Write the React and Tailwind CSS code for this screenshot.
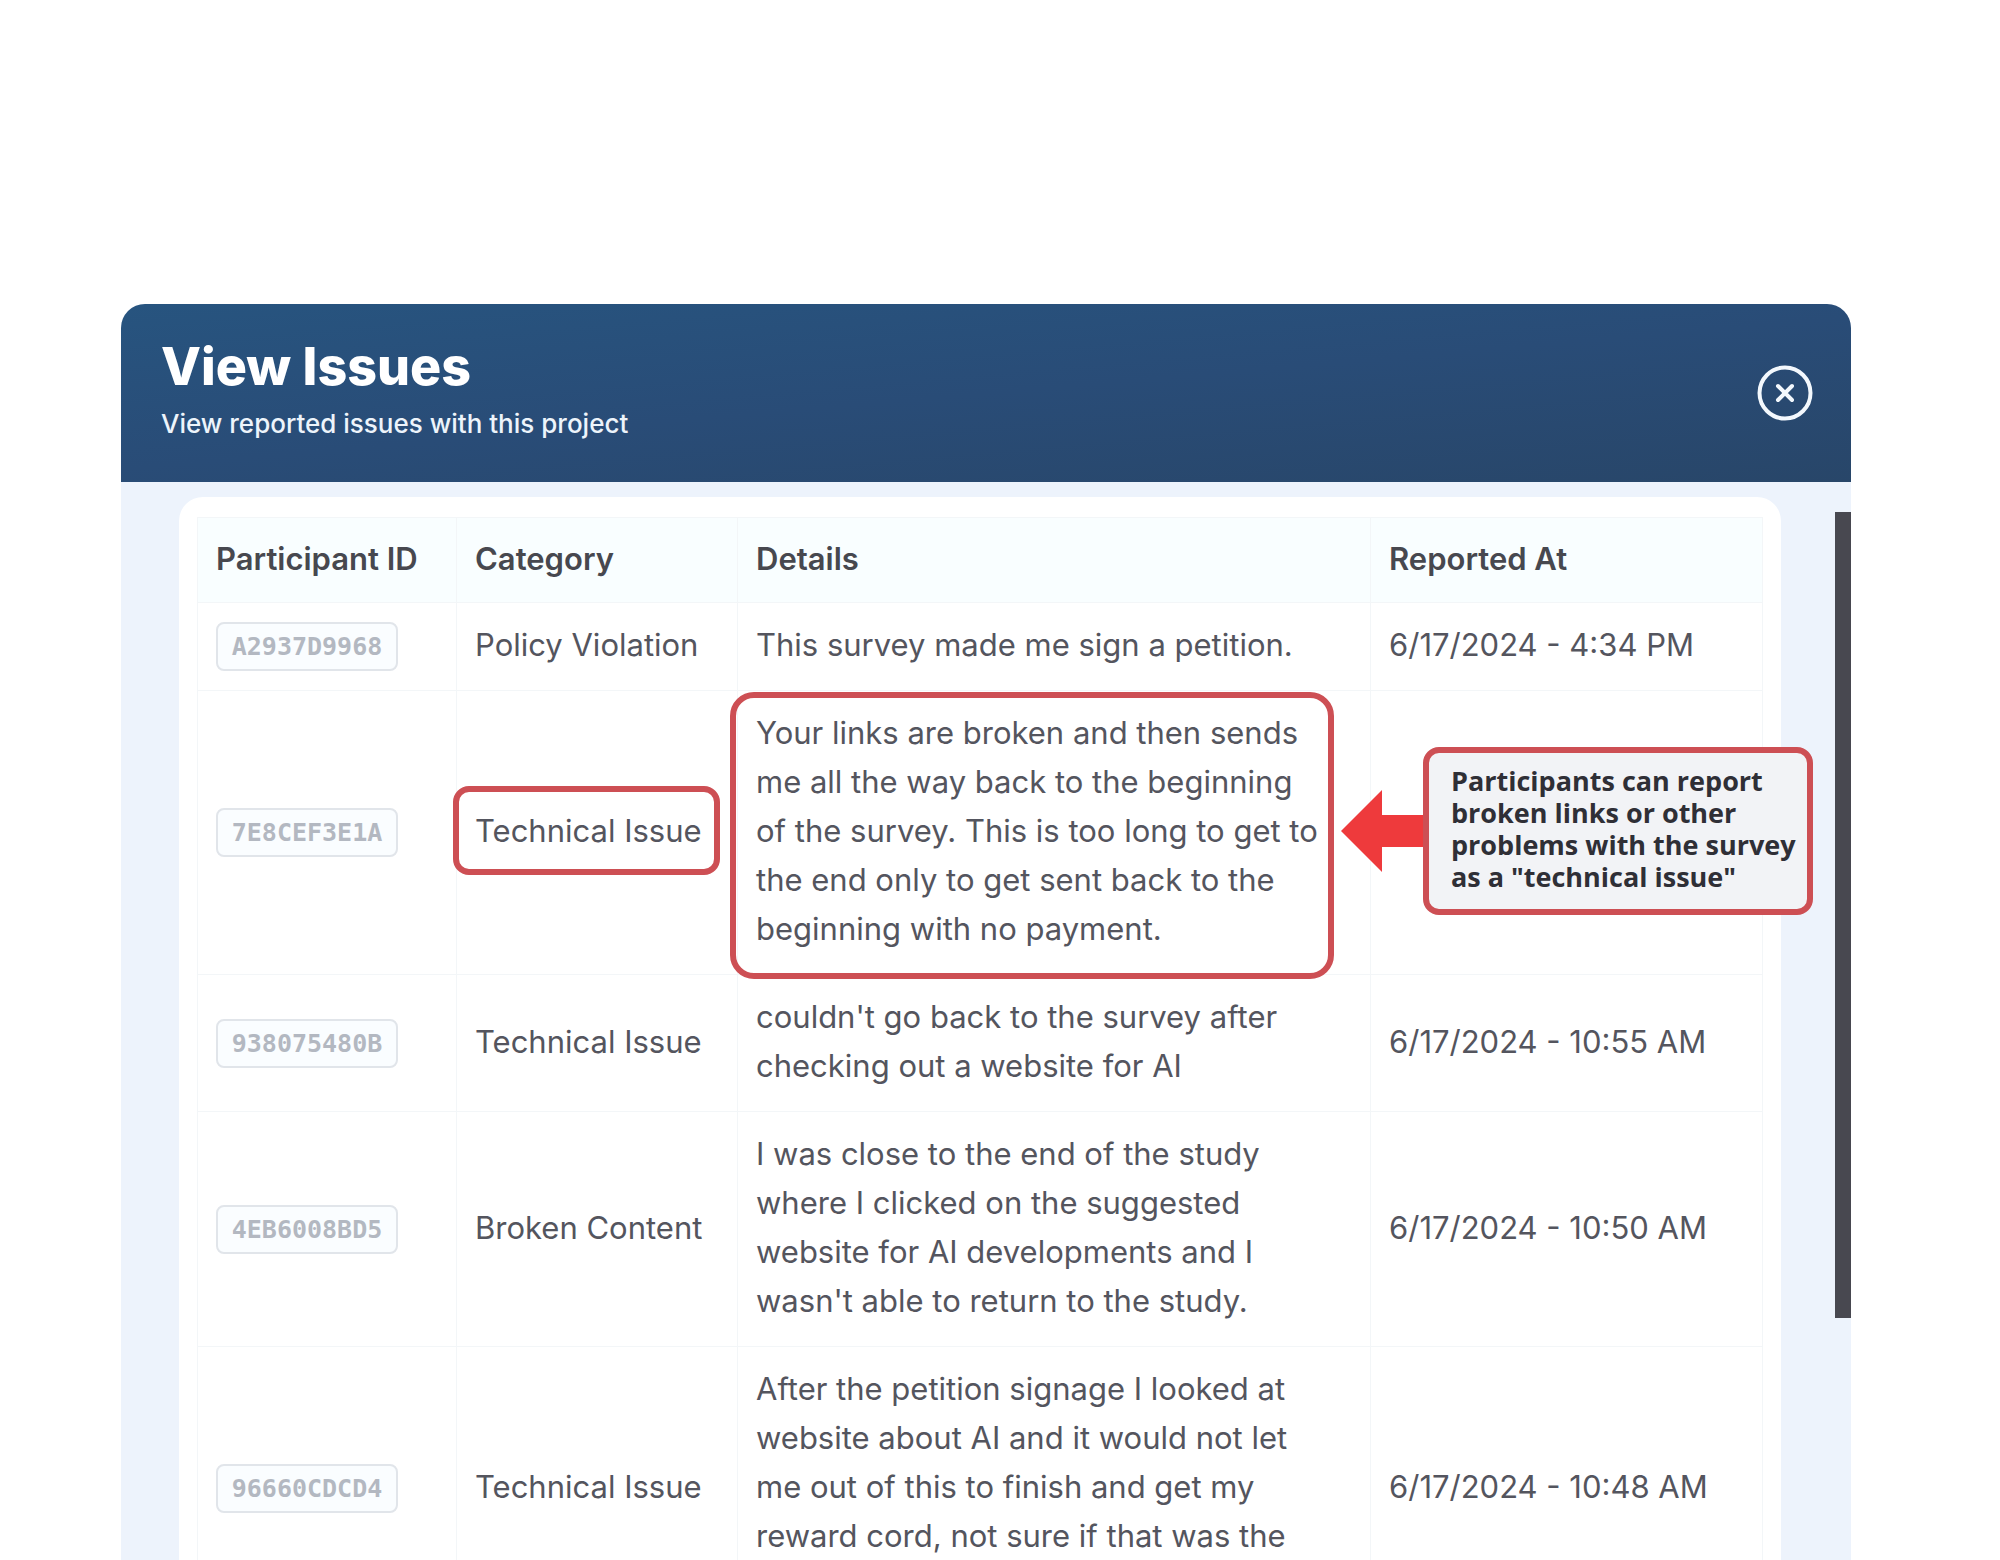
const issues = [
  {
    id: "A2937D9968",
    category: "Policy Violation",
    details: "This survey made me sign a petition.",
    reportedAt: "6/17/2024 - 4:34 PM",
  },
  {
    id: "7E8CEF3E1A",
    category: "Technical Issue",
    details:
      "Your links are broken and then sends\nme all the way back to the beginning\nof the survey. This is too long to get to\nthe end only to get sent back to the\nbeginning with no payment.",
    highlighted: true,
  },
  {
    id: "938075480B",
    category: "Technical Issue",
    details: "couldn't go back to the survey after\nchecking out a website for AI",
    reportedAt: "6/17/2024 - 10:55 AM",
  },
  {
    id: "4EB6008BD5",
    category: "Broken Content",
    details:
      "I was close to the end of the study\nwhere I clicked on the suggested\nwebsite for AI developments and I\nwasn't able to return to the study.",
    reportedAt: "6/17/2024 - 10:50 AM",
  },
  {
    id: "96660CDCD4",
    category: "Technical Issue",
    details:
      "After the petition signage I looked at\nwebsite about AI and it would not let\nme out of this to finish and get my\nreward cord, not sure if that was the",
    reportedAt: "6/17/2024 - 10:48 AM",
  },
];

function Callout() {
  return (
    <div className="absolute -left-12 top-1/2 flex -translate-y-1/2 items-center">
      <svg className="h-[82px] w-[84px] shrink-0" viewBox="0 0 84 82" aria-hidden="true">
        <path d="M0 41 41 0V25H84V57H41V82Z" fill="#ee3a3c" />
      </svg>
      <p className="-ml-0.5 w-[390px] shrink-0 rounded-2xl border-[6px] border-[#cd4f54] bg-[#f2f3f6] pt-3 pb-4 pl-[22px] font-['Open_Sans',sans-serif] text-[27px] font-bold leading-8 text-[#2f2f36] whitespace-pre-line">
        {'Participants can report\nbroken links or other\nproblems with the survey\nas a "technical issue"'}
      </p>
    </div>
  );
}

function IssueRow({ issue }) {
  return (
    <tr className="last:h-[284px]">
      <td className="border border-[#f3f6f8] px-[18px]">
        <span className="flex h-[49px] w-[182px] items-center justify-center rounded-lg border-2 border-[#e1e5ea] bg-[#fafdff] font-['DejaVu_Sans_Mono',monospace] text-[25px] font-bold text-[#b3b8c1]">
          {issue.id}
        </span>
      </td>
      <td className="border border-[#f3f6f8] px-[18px] pb-1">
        <div className="relative w-max">
          {issue.category}
          {issue.highlighted && (
            <span className="absolute -left-[22px] -right-[18px] -inset-y-5 rounded-2xl border-[6px] border-[#cd4f54]" />
          )}
        </div>
      </td>
      <td className="border border-[#f3f6f8] px-[18px] pt-[17px] pb-[21px] align-top">
        <div className="relative whitespace-pre-line">
          {issue.details}
          {issue.highlighted && (
            <span className="absolute -top-4 -bottom-[26px] -left-[26px] right-[18px] rounded-3xl border-[6px] border-[#cd4f54]" />
          )}
        </div>
      </td>
      <td className="border border-[#f3f6f8] px-[18px] pb-1 whitespace-nowrap">
        {issue.highlighted ? (
          <div className="relative">
            <Callout />
          </div>
        ) : (
          issue.reportedAt
        )}
      </td>
    </tr>
  );
}

function App() {
  return (
    <div className="h-screen overflow-hidden bg-white pl-[121px] pr-[149px] pt-[304px] font-['Inter',sans-serif]">
      <section className="overflow-hidden rounded-t-3xl bg-[#edf3fc]">
        <header className="flex h-[178px] items-center justify-between bg-linear-175 from-[#27547f] via-[#294c77] to-[#284669] pl-10 pr-[38px] text-white">
          <div className="pb-2">
            <h1 className="text-[52px] font-extrabold leading-[64px]">View Issues</h1>
            <p className="mt-1.5 text-[26px] font-medium leading-[38px] text-[#edf4fb]">
              View reported issues with this project
            </p>
          </div>
          <button type="button" aria-label="Close" className="rounded-full">
            <svg className="size-[56px]" viewBox="0 0 56 56" fill="none" stroke="#f3f8fd" strokeWidth="4">
              <circle cx="28" cy="28" r="25.5" />
              <path d="M21 21 35 35M35 21 21 35" strokeLinecap="round" />
            </svg>
          </button>
        </header>

        <div className="flex items-start">
          <div className="ml-[58px] mr-[54px] mt-[15px] min-w-0 flex-1 rounded-t-3xl bg-white px-[18px] pt-5">
            <table className="w-full table-fixed border-collapse text-left text-[31px] leading-[49px] text-[#54555e]">
              <colgroup>
                <col className="w-[259px]" />
                <col className="w-[281px]" />
                <col />
                <col className="w-[392px]" />
              </colgroup>
              <thead className="bg-[#f9feff] text-[#47484f]">
                <tr className="h-[85px]">
                  <th className="border border-[#f3f6f8] px-[18px] pb-1 font-semibold whitespace-nowrap">Participant ID</th>
                  <th className="border border-[#f3f6f8] px-[18px] pb-1 font-semibold">Category</th>
                  <th className="border border-[#f3f6f8] px-[18px] pb-1 font-semibold">Details</th>
                  <th className="border border-[#f3f6f8] px-[18px] pb-1 font-semibold">Reported At</th>
                </tr>
              </thead>
              <tbody>
                {issues.map((issue) => (
                  <IssueRow key={issue.id} issue={issue} />
                ))}
              </tbody>
            </table>
          </div>
          <div className="mt-[30px] h-[806px] w-4 bg-[#484850]" />
        </div>
      </section>
    </div>
  );
}

export default App;
